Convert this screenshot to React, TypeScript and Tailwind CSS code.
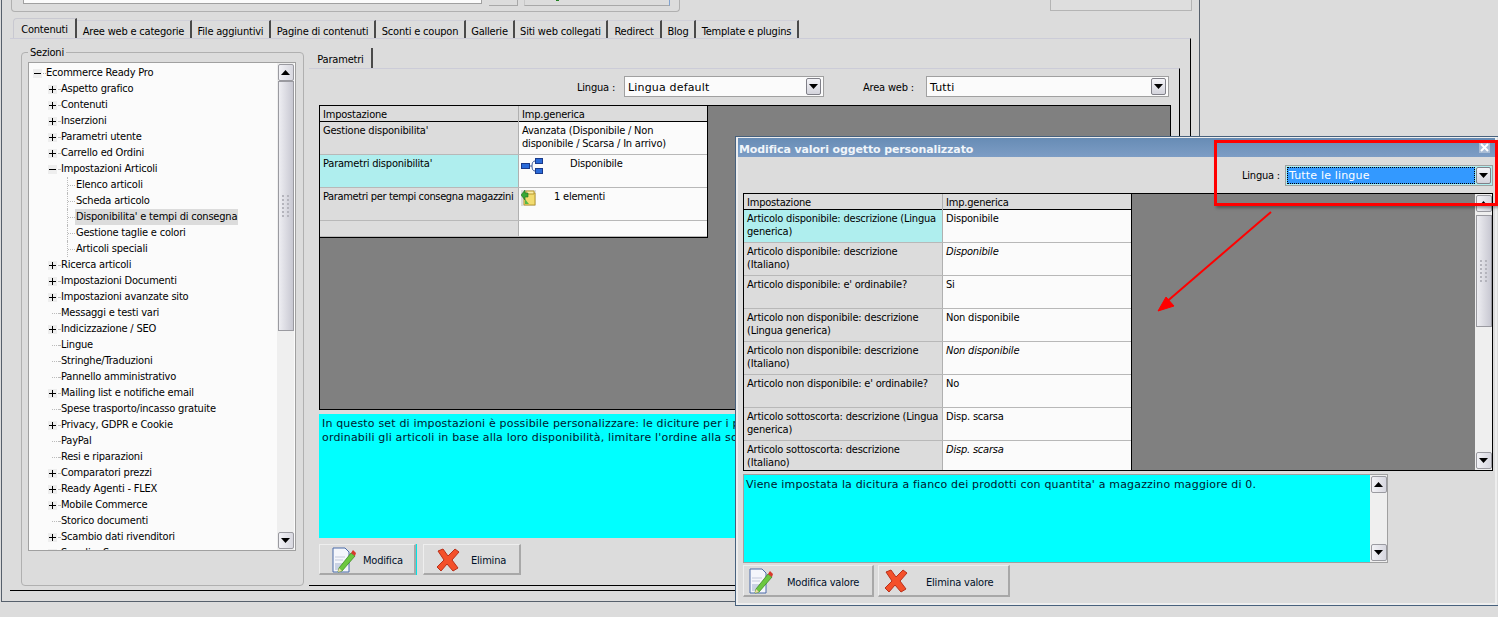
// Ready Pro: finestra impostazioni con dialog "Modifica valori" sovrapposto
type TreeItem = { label: string; level: 0 | 1 | 2; exp?: '+' | '-'; selected?: boolean }

const tabs = [
    { label: 'Contenuti', w: 'w-[64px]', active: true },
    { label: 'Aree web e categorie', w: 'w-[115px]' },
    { label: 'File aggiuntivi', w: 'w-[79px]' },
    { label: 'Pagine di contenuti', w: 'w-[105px]' },
    { label: 'Sconti e coupon', w: 'w-[90px]' },
    { label: 'Gallerie', w: 'w-[49px]' },
    { label: 'Siti web collegati', w: 'w-[93px]' },
    { label: 'Redirect', w: 'w-[54px]' },
    { label: 'Blog', w: 'w-[34px]' },
    { label: 'Template e plugins', w: 'w-[103px]' },
]

const tree: TreeItem[] = [
    { label: 'Ecommerce Ready Pro', level: 0, exp: '-' },
    { label: 'Aspetto grafico', level: 1, exp: '+' },
    { label: 'Contenuti', level: 1, exp: '+' },
    { label: 'Inserzioni', level: 1, exp: '+' },
    { label: 'Parametri utente', level: 1, exp: '+' },
    { label: 'Carrello ed Ordini', level: 1, exp: '+' },
    { label: 'Impostazioni Articoli', level: 1, exp: '-' },
    { label: 'Elenco articoli', level: 2 },
    { label: 'Scheda articolo', level: 2 },
    { label: "Disponibilita' e tempi di consegna", level: 2, selected: true },
    { label: 'Gestione taglie e colori', level: 2 },
    { label: 'Articoli speciali', level: 2 },
    { label: 'Ricerca articoli', level: 1, exp: '+' },
    { label: 'Impostazioni Documenti', level: 1, exp: '+' },
    { label: 'Impostazioni avanzate sito', level: 1, exp: '+' },
    { label: 'Messaggi e testi vari', level: 1 },
    { label: 'Indicizzazione / SEO', level: 1, exp: '+' },
    { label: 'Lingue', level: 1 },
    { label: 'Stringhe/Traduzioni', level: 1 },
    { label: 'Pannello amministrativo', level: 1 },
    { label: 'Mailing list e notifiche email', level: 1, exp: '+' },
    { label: 'Spese trasporto/incasso gratuite', level: 1 },
    { label: 'Privacy, GDPR e Cookie', level: 1, exp: '+' },
    { label: 'PayPal', level: 1 },
    { label: 'Resi e riparazioni', level: 1 },
    { label: 'Comparatori prezzi', level: 1, exp: '+' },
    { label: 'Ready Agenti - FLEX', level: 1, exp: '+' },
    { label: 'Mobile Commerce', level: 1, exp: '+' },
    { label: 'Storico documenti', level: 1 },
    { label: 'Scambio dati rivenditori', level: 1, exp: '+' },
    { label: 'Supplier Sync', level: 1, exp: '+' },
]

const dialogRows = [
    { k: 'Articolo disponibile: descrizione (Lingua generica)', v: 'Disponibile', hl: true },
    { k: 'Articolo disponibile: descrizione (Italiano)', v: 'Disponibile', it: true },
    { k: "Articolo disponibile: e' ordinabile?", v: 'Si' },
    { k: 'Articolo non disponibile: descrizione (Lingua generica)', v: 'Non disponibile' },
    { k: 'Articolo non disponibile: descrizione (Italiano)', v: 'Non disponibile', it: true },
    { k: "Articolo non disponibile: e' ordinabile?", v: 'No' },
    { k: 'Articolo sottoscorta: descrizione (Lingua generica)', v: 'Disp. scarsa' },
    { k: 'Articolo sottoscorta: descrizione (Italiano)', v: 'Disp. scarsa', it: true },
]

function Arrow({ up }: { up?: boolean }) {
    return (
        <svg width="9" height="5" viewBox="0 0 9 5" className="block">
            <path d={up ? 'M0 5 L4.5 0 L9 5 Z' : 'M0 0 L9 0 L4.5 5 Z'} fill="#000" />
        </svg>
    )
}

function ScrollButton({ up, className = '' }: { up?: boolean; className?: string }) {
    return (
        <div className={`flex h-[17px] w-[16px] shrink-0 items-center justify-center rounded-[2px] border border-[#9a9aa0] bg-gradient-to-r from-[#f2f2f6] to-[#d8d8e0] ${className}`}>
            <Arrow up={up} />
        </div>
    )
}

function Grip() {
    return (
        <div className="grid grid-cols-2 gap-x-[3px] gap-y-[2px]">
            {Array.from({ length: 12 }).map((_, i) => (
                <span key={i} className="h-[2px] w-[2px] bg-[#b4b4bc]" />
            ))}
        </div>
    )
}

function Scrollbar({ thumb }: { thumb?: string }) {
    return (
        <div className="flex h-full w-[17px] shrink-0 flex-col items-center justify-between bg-[#efefef] py-px">
            <div className="flex flex-col items-center">
                <ScrollButton up />
                {thumb && (
                    <div className={`flex w-[16px] items-center justify-center border border-[#9a9aa0] bg-gradient-to-r from-[#eeeef2] to-[#c8c8d2] ${thumb}`}>
                        <Grip />
                    </div>
                )}
            </div>
            <ScrollButton />
        </div>
    )
}

function Expander({ kind }: { kind: '+' | '-' }) {
    return (
        <svg width="9" height="9" viewBox="0 0 9 9" className="block shrink-0">
            <rect width="9" height="9" fill="#eeeeee" />
            <path d="M1 4.5 H8" stroke="#000" />
            {kind === '+' && <path d="M4.5 1 V8" stroke="#000" />}
        </svg>
    )
}

function TreeRow({ item }: { item: TreeItem }) {
    if (item.level === 0) {
        return (
            <div className="flex h-4 items-center pl-[4px]">
                <Expander kind="-" />
                <span className="ml-[1px] w-[3px] border-t border-dotted border-[#aaa]" />
                <span className="whitespace-nowrap">{item.label}</span>
            </div>
        )
    }
    if (item.level === 1) {
        return (
            <div className="flex h-4 items-center pl-[19px]">
                {item.exp ? <Expander kind={item.exp} /> : <span className="ml-[4px] w-[5px] border-t border-dotted border-[#bbb]" />}
                <span className="ml-[1px] w-[2px] border-t border-dotted border-[#bbb]" />
                <span className="ml-[1px] whitespace-nowrap">{item.label}</span>
            </div>
        )
    }
    return (
        <div className="flex h-4 items-center pl-[38px]">
            <span className="h-4 border-l border-dotted border-[#bbb]" />
            <span className="w-[7px] border-t border-dotted border-[#bbb]" />
            <span className={`px-px whitespace-nowrap ${item.selected ? 'bg-[#dcdcdc]' : ''}`}>{item.label}</span>
        </div>
    )
}

function Select({ value, className }: { value: string; className: string }) {
    return (
        <div className={`flex h-[21px] items-center justify-between border border-[#a0a0a0] bg-[#fbfbfb] pr-[2px] pl-[3px] ${className}`}>
            <span className="pt-[4px] font-['DejaVu_Sans',sans-serif] text-[11px] tracking-[0.17px]">{value}</span>
            <div className="flex h-[17px] w-[15px] items-center justify-center rounded-[2px] border border-[#808088] bg-gradient-to-b from-[#f4f4f8] to-[#d4d4dc]">
                <Arrow />
            </div>
        </div>
    )
}

function EditIcon() {
    return (
        <svg width="24" height="26" viewBox="0 0 24 26" className="block">
            <path d="M1 1 H13 L17 5 V25 H1 Z" fill="#f4f6fb" stroke="#4a6aa8" />
            <path d="M3 10 H13 M3 13 H11" stroke="#c4cadb" />
            <rect x="3" y="16" width="8" height="7" fill="#c9d2e4" />
            <path d="M7 21 L19 6 L23 9 L10 24 L6 25 Z" fill="#6cc840" stroke="#3e8a24" strokeWidth="0.8" />
            <path d="M19 6 L21 3 L24 6 L23 9 Z" fill="#d8392b" />
            <path d="M6 25 L7 21 L10 24 Z" fill="#f2d9a8" />
        </svg>
    )
}

function DeleteIcon() {
    return (
        <svg width="24" height="24" viewBox="0 0 24 24" className="block">
            <path d="M2 3 L7 1 L12 8 L19 1 L23 4 L16 12 L22 20 L17 23 L11 16 L5 23 L1 19 L8 12 Z" fill="#f4502a" stroke="#b8301a" strokeLinejoin="round" />
        </svg>
    )
}

function TreeNetIcon() {
    return (
        <svg width="22" height="22" viewBox="0 0 22 22" className="-ml-px block">
            <path d="M9 9 H11 Q11 4 14 4 M11 9 Q11 14 14 14" fill="none" stroke="#3a5a9a" />
            <rect x="0.5" y="6.5" width="8" height="5" fill="#2a6ad8" stroke="#1a3a8a" />
            <rect x="14.5" y="1.5" width="7" height="5" fill="#2a6ad8" stroke="#1a3a8a" />
            <rect x="14.5" y="11.5" width="7" height="5" fill="#2a6ad8" stroke="#1a3a8a" />
        </svg>
    )
}

function FolderIcon() {
    return (
        <svg width="15" height="16" viewBox="0 0 15 16" className="-ml-px block bg-[#dcdcdc]">
            <path d="M3 3 H14 V15 H3 Z" fill="#f2dc70" stroke="#b89a30" />
            <path d="M5 1 H13 V4 H5 Z" fill="#fbeea8" stroke="#b89a30" />
            <path d="M0 5 L4 0 L4 3 L7 3 L7 7 L4 7 L4 10 Z" fill="#38a838" stroke="#1e6e1e" strokeWidth="0.6" />
            <path d="M4 9 L8 14 H4 Z" fill="#58b848" />
        </svg>
    )
}

function ActionButton({ label, className, children }: { label: string; className: string; children: React.ReactNode }) {
    return (
        <div className={`flex items-center border border-t-[#eeeeee] border-r-[2px] border-l-[#eeeeee] border-r-[#a8a8a8] border-b-[2px] border-b-[#a8a8a8] bg-[#dcdcdc] ${className}`}>
            {children}
            <span className="pt-[5px] whitespace-nowrap text-[#001028]">{label}</span>
        </div>
    )
}

function HeaderRow() {
    return (
        <div className="grid h-[16px] grid-cols-[199px_1fr] border-b border-black bg-[#dcdcdc] leading-[17px]">
            <div className="border-r border-[#b0b0b0] pl-[3px]">Impostazione</div>
            <div className="pl-[3px]">Imp.generica</div>
        </div>
    )
}

function Row({ k, hl, tight, h = 'h-[33px]', children }: { k?: string; hl?: boolean; tight?: boolean; h?: string; children?: React.ReactNode }) {
    return (
        <div className={`grid grid-cols-[199px_1fr] border-b border-[#b8b8b8] ${h}`}>
            <div className={`border-r border-[#b0b0b0] pt-[2px] pl-[3px] leading-[13px] ${hl ? 'bg-[#afeeee]' : 'bg-[#dcdcdc]'} ${tight ? 'whitespace-nowrap tracking-[-0.35px]' : ''}`}>{k}</div>
            <div className="bg-[#fbfbfb] pt-[2px] pl-[3px] leading-[13px]">{children}</div>
        </div>
    )
}

export default function App() {
    return (
        <div className="relative h-[617px] w-[1498px] overflow-hidden bg-[#dcdcdc] font-['DejaVu_Sans_Condensed','DejaVu_Sans',sans-serif] text-[11px] tracking-[-0.2px] text-black">
            {/* finestra principale */}
            <div className="ml-px h-[602px] w-[1199px] border-r border-b border-l border-[#56606c] pl-[1px]">
                <div className="flex h-[19px] items-start">
                    <div className="ml-[8px] flex h-[12px] w-[669px] items-start rounded-b-[4px] border-x border-b border-[#b0b0b0]">
                        <div className="ml-[11px] h-[4px] w-[459px] border-x border-b border-[#a0a0a0] bg-[#fbfbfb]" />
                        <div className="ml-[7px] h-[6px] w-[29px] border-r border-b border-[#a8a8a8]" />
                        <div className="relative ml-[6px] h-[6px] w-[146px] border-x border-b border-x-[#c8c8c8] border-r-[#7fa2d0] border-b-[#a8a8a8]">
                            <span className="absolute top-0 left-[31px] h-px w-[3px] bg-[#208020]" />
                        </div>
                    </div>
                    <div className="ml-[370px] h-[11px] w-[142px] border-x border-b border-[#b4b4b4] bg-[#dedede]" />
                </div>

                <div className="ml-[10px] flex h-[19px]">
                    {tabs.map(t => (
                        <div
                            key={t.label}
                            className={`flex items-center justify-center whitespace-nowrap border-r-2 border-[#4a4a4a] ${t.w} ${t.active ? '-mt-px h-[20px] rounded-tl-[4px] border-t border-l border-t-[#c8c8d0] border-l-[#c8c8d0] pt-[3px]' : 'mt-px h-[18px] border-t border-t-[#d0d0d8] pt-[6px]'}`}
                        >
                            {t.label}
                        </div>
                    ))}
                </div>

                <div className="ml-[7px] flex h-[553px] w-[1181px] gap-[5px] border-t border-r border-b border-t-[#ccccd8] border-r-black border-b-black pl-[11px]">
                    {/* Sezioni */}
                    <div className="relative mt-[13px] h-[534px] w-[283px] shrink-0 rounded-[4px] border border-[#b0b0b0] pt-[9px] pl-[6px]">
                        <span className="absolute -top-[7px] left-[6px] bg-[#dcdcdc] px-[2px] leading-[13px]">Sezioni</span>
                        <div className="flex h-[489px] w-[268px] justify-between border border-[#a0a0a0] bg-[#fbfbfb] pr-px">
                            <div className="h-full flex-1 overflow-hidden pt-[2px]">
                                {tree.map(item => (
                                    <TreeRow key={item.label} item={item} />
                                ))}
                            </div>
                            <Scrollbar thumb="h-[250px]" />
                        </div>
                    </div>

                    {/* Parametri */}
                    <div className="mt-[9px] flex h-[538px] w-[871px] flex-col">
                        <div className="flex h-[20px] w-[64px] items-center justify-center rounded-tl-[4px] border-r-2 border-[#4a4a4a] pt-[5px] pl-px">Parametri</div>
                        <div className="flex-1 border-t border-r border-b border-t-[#ccccd8] border-r-black border-b-black pt-[7px] pl-[10px]">
                            <div className="flex h-[21px] items-center">
                                <span className="ml-[258px] w-[47px] pt-[4px]">Lingua :</span>
                                <Select value="Lingua default" className="w-[200px]" />
                                <span className="ml-[39px] w-[63px] pt-[4px]">Area web :</span>
                                <Select value="Tutti" className="w-[243px]" />
                            </div>
                            <div className="mt-[8px] h-[305px] w-[852px] border border-black bg-[#808080]">
                                <div className="w-[388px] border-r border-b border-black">
                                    <HeaderRow />
                                    <Row k="Gestione disponibilita'">Avanzata (Disponibile / Non disponibile / Scarsa / In arrivo)</Row>
                                    <Row k="Parametri disponibilita'" hl>
                                        <div className="flex items-start">
                                            <TreeNetIcon />
                                            <span className="ml-[27px]">Disponibile</span>
                                        </div>
                                    </Row>
                                    <Row k="Parametri per tempi consegna magazzini" tight>
                                        <div className="flex items-start">
                                            <FolderIcon />
                                            <span className="ml-[18px]">1 elementi</span>
                                        </div>
                                    </Row>
                                    <Row h="h-[16px]" />
                                </div>
                            </div>
                            <div className="mt-[4px] h-[124px] w-[852px] bg-[#00ffff] pt-[3px] pl-[3px] font-['DejaVu_Sans',sans-serif] text-[11px] leading-[14px] tracking-[0.17px] text-[#001830]">
                                <p className="whitespace-nowrap">In questo set di impostazioni è possibile personalizzare: le diciture per i prodotti</p>
                                <p className="whitespace-nowrap">ordinabili gli articoli in base alla loro disponibilità, limitare l'ordine alla so</p>
                            </div>
                            <div className="mt-[6px] flex h-[31px]">
                                <ActionButton label="Modifica" className="w-[97px] pl-[12px]">
                                    <span className="mt-px mr-[7px]"><EditIcon /></span>
                                </ActionButton>
                                <span className="w-px bg-[#00e4e4]" />
                                <ActionButton label="Elimina" className="ml-[6px] w-[98px] pl-[12px]">
                                    <span className="mt-px mr-[11px]"><DeleteIcon /></span>
                                </ActionButton>
                            </div>
                        </div>
                    </div>
                </div>
            </div>

            {/* dialog */}
            <div className="absolute top-[136px] left-[735px] h-[470px] w-[775px] border border-[#47617d] bg-[#dcdcdc]">
                <div className="h-full w-[761px] border-2 border-t border-[#eeeeee]">
                    <div className="flex h-[19px] items-center justify-between bg-gradient-to-b from-[#678cb5] to-[#7d9dc5] pl-px">
                        <span className="pt-[5px] font-['DejaVu_Sans',sans-serif] text-[11px] font-bold tracking-[-0.12px] text-[#f0f5fa]">Modifica valori oggetto personalizzato</span>
                        <span className="mr-[5px] flex h-[11px] w-[11px] items-center justify-center bg-[#a9bdd6]">
                            <svg width="9" height="9" viewBox="0 0 9 9" className="block">
                                <path d="M1 1 L8 8 M8 1 L1 8" stroke="#fff" strokeWidth="2" />
                            </svg>
                        </span>
                    </div>
                    <div className="pl-[5px]">
                        <div className="flex h-[36px] w-[750px] items-center justify-end">
                            <span className="mr-[5px] pt-[2px]">Lingua :</span>
                            <div className="flex h-[21px] w-[208px] items-center justify-between border border-[#a0a0a0] bg-[#afeeee] pr-[1px] pl-[1px]">
                                <span className="flex h-[17px] w-[188px] items-center border border-dotted border-black bg-[#3399ff] pt-[2px] pl-[1px] font-['DejaVu_Sans',sans-serif] tracking-[0.17px] text-white">Tutte le lingue</span>
                                <div className="flex h-[17px] w-[15px] items-center justify-center rounded-[2px] border border-[#808088] bg-gradient-to-b from-[#f4f4f8] to-[#d4d4dc]">
                                    <Arrow />
                                </div>
                            </div>
                        </div>
                        <div className="flex h-[278px] w-[750px] justify-between overflow-hidden border border-black bg-[#808080]">
                            <div className="h-full w-[388px] border-r border-black">
                                <HeaderRow />
                                {dialogRows.map(r => (
                                    <Row key={r.k} k={r.k} hl={r.hl}>
                                        <span className={r.it ? 'italic' : ''}>{r.v}</span>
                                    </Row>
                                ))}
                            </div>
                            <Scrollbar thumb="mt-[3px] h-[112px]" />
                        </div>
                        <div className="mt-[3px] flex h-[89px] w-[645px] justify-between border border-[#a0a0a0] bg-[#00ffff] pl-[2px]">
                            <p className="pt-[3px] font-['DejaVu_Sans',sans-serif] leading-[14px] tracking-[0.17px] text-[#001830]">Viene impostata la dicitura a fianco dei prodotti con quantita' a magazzino maggiore di 0.</p>
                            <Scrollbar />
                        </div>
                        <div className="mt-[2px] flex h-[32px] gap-[4px]">
                            <ActionButton label="Modifica valore" className="w-[131px] pl-[5px]">
                                <span className="mt-px mr-[14px]"><EditIcon /></span>
                            </ActionButton>
                            <ActionButton label="Elimina valore" className="w-[132px] pl-[5px]">
                                <span className="mt-px mr-[18px]"><DeleteIcon /></span>
                            </ActionButton>
                        </div>
                    </div>
                </div>
            </div>

            {/* annotazione rossa */}
            <div className="absolute top-[140px] left-[1214px] h-[66px] w-[284px] border-[3px] border-[#ff0000] shadow-[2px_2px_3px_rgba(0,0,0,0.35)]" />
            <svg width="130" height="110" viewBox="0 0 130 110" className="absolute top-[208px] left-[1150px]">
                <g fill="#ff0000" stroke="#ff0000">
                    <path d="M121 4 L14 96" strokeWidth="2" fill="none" />
                    <path d="M8 103 L16 89 L24 98 Z" strokeWidth="1" />
                </g>
            </svg>
        </div>
    )
}
